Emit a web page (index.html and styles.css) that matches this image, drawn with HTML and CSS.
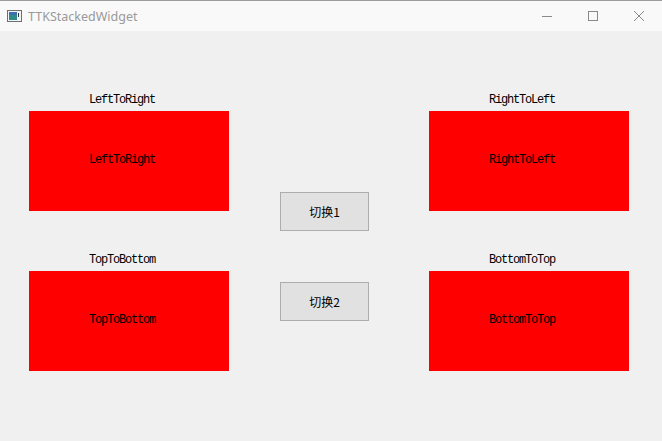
FILE: index.html
```html
<!DOCTYPE html>
<html>
<head>
<meta charset="utf-8">
<title>TTKStackedWidget</title>
<link rel="stylesheet" href="styles.css">
</head>
<body>
<div class="window">
  <div class="titlebar">
    <svg class="app-icon" width="15" height="12" viewBox="0 0 15 12">
      <rect x="0.5" y="0.5" width="14" height="11" fill="#f4f4f4" stroke="#6e6e6e"/>
      <rect x="2" y="2" width="8" height="8" fill="#2f8a8a"/>
      <rect x="2" y="2" width="8" height="3" fill="#3a6fb0"/>
      <rect x="11" y="3" width="1" height="4" fill="#333"/>
    </svg>
    <span class="title">TTKStackedWidget</span>
    <div class="controls">
      <span class="ctl">
        <svg width="12" height="12" viewBox="0 0 12 12"><path d="M1 6.5H11" stroke="#8a8a8a" stroke-width="1"/></svg>
      </span>
      <span class="ctl">
        <svg width="12" height="12" viewBox="0 0 12 12"><rect x="1.5" y="1.5" width="9" height="9" fill="none" stroke="#8a8a8a"/></svg>
      </span>
      <span class="ctl">
        <svg width="12" height="12" viewBox="0 0 12 12"><path d="M1 1L11 11M11 1L1 11" stroke="#8a8a8a" stroke-width="1"/></svg>
      </span>
    </div>
  </div>
  <div class="content">
    <div class="cell">
      <div class="label">LeftToRight</div>
      <div class="box">LeftToRight</div>
    </div>
    <div class="buttons">
      <button class="btn">切换1</button>
      <button class="btn">切换2</button>
    </div>
    <div class="cell">
      <div class="label">RightToLeft</div>
      <div class="box">RightToLeft</div>
    </div>
    <div class="cell">
      <div class="label">TopToBottom</div>
      <div class="box">TopToBottom</div>
    </div>
    <div class="cell">
      <div class="label">BottomToTop</div>
      <div class="box">BottomToTop</div>
    </div>
  </div>
</div>
</body>
</html>
```

FILE: styles.css
```css
html, body {
  margin: 0;
  padding: 0;
  background: #f0f0f0;
}
.window {
  width: 662px;
  height: 441px;
  box-sizing: border-box;
  border-top: 1px solid #9c9c9c;
  background: #f0f0f0;
  overflow: hidden;
}
.titlebar {
  height: 30px;
  background: #f9f9f9;
  display: flex;
  align-items: center;
  font-family: "Noto Sans", "Noto Sans CJK SC", sans-serif;
}
.app-icon {
  margin-left: 7px;
  margin-right: 6px;
}
.title {
  font-size: 12.5px;
  color: #9a9a9a;
}
.controls {
  margin-left: auto;
  display: flex;
  height: 30px;
}
.ctl {
  width: 46px;
  display: flex;
  align-items: center;
  justify-content: center;
}
.content {
  display: grid;
  grid-template-columns: 200px 51px 89px 60px 200px;
  grid-template-rows: 120px 120px;
  row-gap: 40px;
  padding: 60px 0 0 29px;
}
.cell {
  display: flex;
  flex-direction: column;
}
.cell:nth-child(1) { grid-column: 1; grid-row: 1; }
.cell:nth-child(3) { grid-column: 5; grid-row: 1; }
.cell:nth-child(4) { grid-column: 1; grid-row: 2; }
.cell:nth-child(5) { grid-column: 5; grid-row: 2; }
.label, .box {
  font-family: "Liberation Mono", monospace;
  font-size: 12px;
  letter-spacing: -1.2px;
  color: #000;
}
.label {
  height: 16px;
  line-height: 16px;
  margin-bottom: 4px;
  padding: 1px 0 0 60px;
  box-sizing: border-box;
}
.box {
  height: 100px;
  background: #ff0000;
  box-sizing: border-box;
  padding: 41px 0 0 60px;
  line-height: 16px;
}
.buttons {
  grid-column: 3;
  grid-row: 1 / span 2;
  display: flex;
  flex-direction: column;
  gap: 51px;
  padding-top: 101px;
}
.btn {
  width: 89px;
  height: 39px;
  box-sizing: border-box;
  margin: 0;
  padding: 0;
  background: #e1e1e1;
  border: 1px solid #adadad;
  border-radius: 0;
  font-family: "Noto Sans CJK SC", sans-serif;
  font-size: 12px;
  color: #000;
}
```
